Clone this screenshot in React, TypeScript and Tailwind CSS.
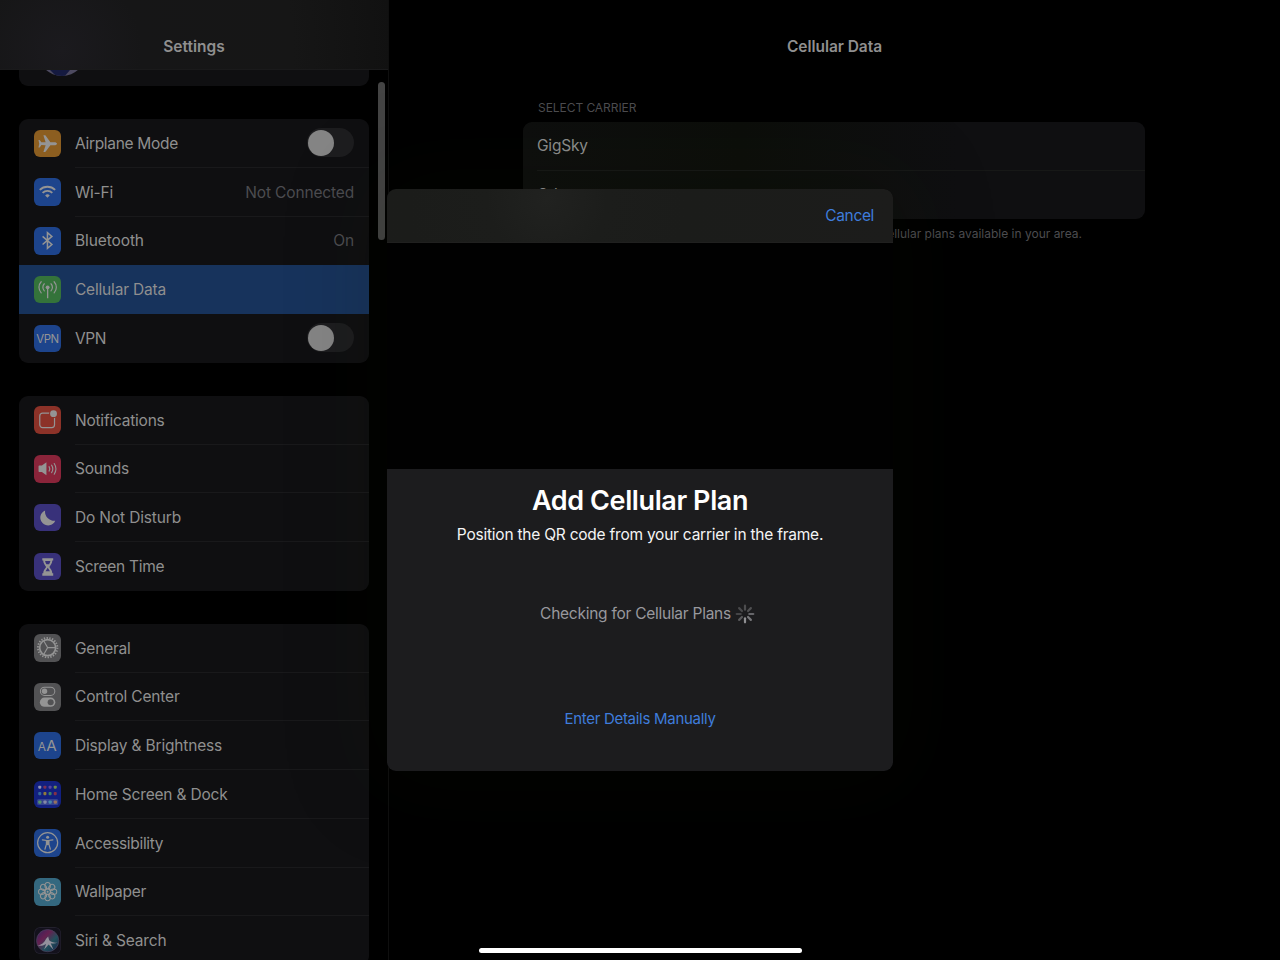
import type { ReactNode } from "react";

const range = (n: number) => Array.from({ length: n }, (_, i) => i);

function Tile({ bg, children }: { bg: string; children: ReactNode }) {
  return (
    <svg viewBox="0 0 27 27" className={`size-[27.3px] shrink-0 rounded-[6px] ${bg}`} fill="none">
      {children}
    </svg>
  );
}

const INK = "#949494";

const icons: Record<string, ReactNode> = {
  airplane: (
    <Tile bg="bg-[#8c5e20]">
      <path
        fill={INK}
        d="M22.8 13.500c0 .8-1.300 1.500-2.800 1.500h-3.800l-4.600 6.300c-.2.3-.5.4-.8.4H9.300l2.200-6.700-4.200-.2-1.700 2.400H4.400l.8-3.700-.8-3.700h1.200l1.700 2.400 4.200-.2-2.200-6.700h1.500c.3 0 .6.1.8.4l4.600 6.300h3.800c1.500 0 2.800.7 2.800 1.500Z"
      />
    </Tile>
  ),
  wifi: (
    <Tile bg="bg-[#1d448c]">
      <path d="M5.700 11.700a10.800 10.800 0 0 1 15.200 0M8.500 14.700a6.800 6.800 0 0 1 9.600 0" stroke={INK} strokeWidth="1.900" />
      <path d="M11 17.200a3.300 3.300 0 0 1 4.600 0l-2.300 2.400Z" fill={INK} />
    </Tile>
  ),
  bluetooth: (
    <Tile bg="bg-[#1d448c]">
      <path d="m8.500 9.300 9.200 8-4.400 3.900V5.600l4.400 3.700-9.200 8" stroke={INK} strokeWidth="1.500" />
    </Tile>
  ),
  cellular: (
    <Tile bg="bg-[#34733a]">
      <circle cx="13.500" cy="11.200" r="1.900" fill={INK} />
      <path d="M13.500 12v10" stroke={INK} strokeWidth="1.300" />
      <path
        d="M10.200 7.700a5 5 0 0 0 0 7M16.800 7.700a5 5 0 0 1 0 7M7.100 5.700a8 8 0 0 0 0 11M19.900 5.700a8 8 0 0 1 0 11"
        stroke={INK}
        strokeWidth="1.200"
        strokeLinecap="round"
      />
    </Tile>
  ),
  vpn: (
    <Tile bg="bg-[#1d448c]">
      <text x="13.500" y="17.500" fontSize="11.300" textAnchor="middle" textLength="22.500" fill={INK}>VPN</text>
    </Tile>
  ),
  notifications: (
    <Tile bg="bg-[#8c3228]">
      <rect x="5.700" y="7" width="14.600" height="14.300" rx="2.800" stroke={INK} strokeWidth="1.200" />
      <circle cx="19.300" cy="7.600" r="4.400" fill="#8c3228" />
      <circle cx="19.300" cy="7.600" r="3.400" fill={INK} />
    </Tile>
  ),
  sounds: (
    <Tile bg="bg-[#8a243a]">
      <path d="M4.500 11.200c0-.5.3-.8.8-.8h2.500l4.500-3.200v12.800l-4.500-3.200H5.300c-.5 0-.8-.3-.8-.8Z" fill={INK} />
      <path
        d="M14.900 11.500a4 4 0 0 1 0 4.400M17.400 10a6.800 6.800 0 0 1 0 7.400M20 8.400a9.800 9.800 0 0 1 0 10.600"
        stroke={INK}
        strokeWidth="1.100"
        strokeLinecap="round"
      />
    </Tile>
  ),
  moon: (
    <Tile bg="bg-[#38317a]">
      <path d="M11 6.400a9 9 0 0 0 10 10.200A7.700 7.700 0 1 1 11 6.400Z" fill={INK} />
    </Tile>
  ),
  hourglass: (
    <Tile bg="bg-[#38317a]">
      <path
        d="M8.200 5.100h10.800v2.400h-.9c-.1 3-1.600 4.400-2.900 6.300 1.300 1.900 2.800 3.300 2.900 6.300h.9v2.400H8.200v-2.400h.9c.1-3 1.600-4.400 2.900-6.300-1.300-1.900-2.800-3.300-2.900-6.300h-.9Z"
        fill={INK}
      />
      <path d="M11 7.900h5.200c-.2 1.500-.7 2.300-1.300 3.200h-2.600c-.6-.9-1.100-1.700-1.300-3.200ZM13.600 14.700l2.200 3.400h-4.400Z" fill="#38317a" />
    </Tile>
  ),
  gear: (
    <Tile bg="bg-[#525254]">
      <circle cx="13.500" cy="13.500" r="7.900" stroke={INK} strokeWidth="1.700" />
      <circle cx="13.500" cy="13.500" r="9.600" stroke={INK} strokeWidth="1.900" strokeDasharray="1.370 1.370" />
      <path d="M13.500 13.500h7.500M13.500 13.500 9.700 7M13.500 13.500 9.700 20" stroke={INK} strokeWidth="1.100" />
    </Tile>
  ),
  control: (
    <Tile bg="bg-[#525254]">
      <rect x="6.300" y="4.100" width="14.300" height="8.200" rx="4.100" stroke={INK} strokeWidth="1" />
      <circle cx="10.400" cy="8.200" r="2.700" fill={INK} />
      <rect x="5.800" y="14.400" width="15.300" height="9.200" rx="4.600" fill={INK} />
      <circle cx="16.500" cy="19" r="3" fill="#525254" />
    </Tile>
  ),
  display: (
    <Tile bg="bg-[#1d448c]">
      <text x="3.600" y="18.800" fontSize="11.800" fill={INK}>A</text>
      <text x="12.200" y="18.800" fontSize="15" fill={INK}>A</text>
    </Tile>
  ),
  home: (
    <Tile bg="bg-[#122080]">
      {["#8f93b0", "#7d3154", "#5c45a0", "#6f8b4a", "#35689a", "#8f7a3a", "#3c8068", "#853048"].map((c, i) => (
        <rect key={i} x={4.200 + (i % 4) * 5.100} y={i < 4 ? 4.600 : 11} width="3" height="3" rx=".8" fill={c} />
      ))}
      <rect x="3" y="17.800" width="21" height="6" rx="1.500" fill="#35438f" />
      {["#55906c", "#8388a8", "#4787a8", "#96705f"].map((c, i) => (
        <rect key={c} x={4.200 + i * 5.100} y="19.200" width="3.200" height="3.200" rx=".8" fill={c} />
      ))}
    </Tile>
  ),
  accessibility: (
    <Tile bg="bg-[#1d448c]">
      <circle cx="13.500" cy="13.500" r="9.900" stroke={INK} strokeWidth="1.200" />
      <circle cx="13.500" cy="8.200" r="1.500" fill={INK} />
      <path
        d="m8.300 10.700 4 .7v3.600l-1.500 5M18.700 10.700l-4 .7v3.600l1.500 5"
        stroke={INK}
        strokeWidth="1.200"
        strokeLinecap="round"
      />
      <path d="M12 11h3v4.500l-1.500.5-1.500-.5Z" fill={INK} />
    </Tile>
  ),
  wallpaper: (
    <Tile bg="bg-[#34687f]">
      {range(8).map((i) => (
        <ellipse
          key={i}
          cx="13.500"
          cy="7.700"
          rx="2.700"
          ry="3.200"
          stroke={INK}
          strokeWidth="1"
          transform={`rotate(${i * 45} 13.500 13.500)`}
        />
      ))}
      <circle cx="13.500" cy="13.500" r="2.900" stroke={INK} strokeWidth="1" />
      <circle cx="13.500" cy="13.500" r="1" fill={INK} />
    </Tile>
  ),
  siri: (
    <Tile bg="bg-[#13111c]">
      <defs>
        <linearGradient id="orb" x1="0" y1="0" x2="1" y2="1">
          <stop offset="0" stopColor="#33235e" />
          <stop offset=".35" stopColor="#652050" />
          <stop offset=".62" stopColor="#22505c" />
          <stop offset="1" stopColor="#152348" />
        </linearGradient>
      </defs>
      <rect x=".5" y=".5" width="26" height="26" rx="5.500" stroke="#23212d" />
      <circle cx="13.500" cy="13.500" r="11" fill="url(#orb)" stroke="#4a425e" strokeWidth=".7" />
      <path
        d="M3.500 18.500c4-1 6.500-3 8.500-7l2-2 1 3.500c2 2 5 2.500 8.500 2.500-3 1-5 .8-7 .5l2.800 6.500-4.800-5.300-4.500 5 2-5.500c-2.500 1.500-5 2.200-8.500 1.800Z"
        fill="#93919c"
      />
    </Tile>
  ),
};

function Toggle() {
  return (
    <span className="flex h-[29px] w-[47.500px] items-center rounded-full bg-[#1d1d1f] pl-[1.500px]">
      <span className="size-[26px] rounded-full bg-[#858585]" />
    </span>
  );
}

type Item = { icon: string; label: string; track: string; detail?: string; toggle?: boolean; selected?: boolean };

const groups: Item[][] = [
  [
    { icon: "airplane", label: "Airplane Mode", track: "tracking-[-0.31px]", toggle: true },
    { icon: "wifi", label: "Wi-Fi", track: "tracking-[-0.2px]", detail: "Not Connected" },
    { icon: "bluetooth", label: "Bluetooth", track: "tracking-[-0.1px]", detail: "On" },
    { icon: "cellular", label: "Cellular Data", track: "tracking-[-0.19px]", selected: true },
    { icon: "vpn", label: "VPN", track: "tracking-[-0.4px]", toggle: true },
  ],
  [
    { icon: "notifications", label: "Notifications", track: "tracking-[-0.22px]" },
    { icon: "sounds", label: "Sounds", track: "tracking-[-0.23px]" },
    { icon: "moon", label: "Do Not Disturb", track: "tracking-[-0.15px]" },
    { icon: "hourglass", label: "Screen Time", track: "tracking-[-0.28px]" },
  ],
  [
    { icon: "gear", label: "General", track: "tracking-[-0.2px]" },
    { icon: "control", label: "Control Center", track: "tracking-[-0.18px]" },
    { icon: "display", label: "Display & Brightness", track: "tracking-[-0.17px]" },
    { icon: "home", label: "Home Screen & Dock", track: "tracking-[-0.19px]" },
    { icon: "accessibility", label: "Accessibility", track: "tracking-[-0.32px]" },
    { icon: "wallpaper", label: "Wallpaper", track: "tracking-[-0.25px]" },
    { icon: "siri", label: "Siri & Search", track: "tracking-[-0.17px]" },
  ],
];

function Row({ item, line }: { item: Item; line: boolean }) {
  return (
    <div className={`flex h-[48.750px] items-center gap-[14px] pl-[14.700px] ${item.selected ? "bg-[#17335c]" : ""}`}>
      {icons[item.icon]}
      <div className={`flex h-full grow items-center justify-between border-b pr-[15px] ${line ? "border-[#19191b]" : "border-transparent"}`}>
        <span className={`pt-[2px] text-[#8f8f8f] ${item.track}`}>{item.label}</span>
        {item.detail && <span className="pt-[2px] tracking-[-0.150px] text-[#4c4c50]">{item.detail}</span>}
        {item.toggle && <Toggle />}
      </div>
    </div>
  );
}

function Sidebar() {
  return (
    <aside className="relative flex h-full w-[389px] shrink-0 flex-col border-r border-[#0f0f0f]">
      <header className="flex h-[70px] shrink-0 justify-center border-b border-[#1a1a1b] bg-[radial-gradient(circle_at_62px_50px,#1b1a1e_0,#161617_80px,#161616_70%,#111111_100%)] pt-[35px] font-semibold text-[#8f8f8f]">
        Settings
      </header>
      <div className="flex flex-col gap-[33px] pr-[19px] pl-[19px]">
        <div className="h-[16px] overflow-hidden rounded-b-[9px] bg-[#0f0f11] pl-[19px]">
          <svg viewBox="0 0 48 16" className="h-4 w-12">
            <defs>
              <clipPath id="avatar">
                <circle cx="24" cy="-18" r="24" />
              </clipPath>
            </defs>
            <g clipPath="url(#avatar)">
              <path d="M0 0h48v16H0Z" fill="#4d4a60" />
              <path d="M12 0h20l-6 7-8-1Z" fill="#151a40" />
            </g>
          </svg>
        </div>
        {groups.map((group, g) => (
          <section key={g} className="overflow-hidden rounded-[9px] bg-[#0f0f11]">
            {group.map((item, i) => (
              <Row key={item.label} item={item} line={i < group.length - 1 && !item.selected && !group[i + 1].selected} />
            ))}
          </section>
        ))}
      </div>
      <span className="absolute top-[82px] left-[378px] h-[158px] w-[7px] rounded-full bg-[#444444]" />
    </aside>
  );
}

function Detail() {
  return (
    <main className="flex grow flex-col">
      <h1 className="pt-[35px] text-center font-semibold tracking-[-0.050px] text-[#8f8f8f]">Cellular Data</h1>
      <div className="mt-[40px] ml-[134px] flex w-[622px] flex-col">
        <h2 className="pl-[15px] text-[12px] leading-[18px] tracking-[-0.060px] text-[#4c4c4f]">SELECT CARRIER</h2>
        <div className="mt-[5px] flex flex-col rounded-[9px] bg-[linear-gradient(to_right,#0e0f0e,#0c0e0a_35%,#0f0f11_70%)] pl-[14px] text-[#8f8f8f]">
          <div className="flex h-[48.500px] items-center border-b border-[#171817] pt-[1px] tracking-[-0.200px]">GigSky</div>
          <div className="flex h-[48px] items-center">Other</div>
        </div>
        <p className="mt-[6px] pr-[63px] text-right text-[12px] leading-[18px] text-[#4c4c4f]">
          cellular plans available in your area.
        </p>
      </div>
    </main>
  );
}

function Spinner() {
  const shades = ["#4d4d4f", "#505052", "#66666a", "#77777a", "#909093", "#5a5a5c", "#454547", "#49494b"];
  return (
    <svg viewBox="-10 -10 20 20" className="size-5">
      {shades.map((shade, i) => (
        <path
          key={i}
          d="M0-4.300v-4"
          stroke={shade}
          strokeWidth="2.200"
          strokeLinecap="round"
          transform={`rotate(${i * 45})`}
        />
      ))}
    </svg>
  );
}

function PlanDialog() {
  return (
    <div
      role="dialog"
      className="absolute top-[189px] left-[387px] flex h-[581.500px] w-[506px] flex-col overflow-hidden rounded-[9px] bg-black shadow-[0_0_90px_20px_rgba(20,30,5,0.150)]"
    >
      <header className="flex h-[53.500px] items-center justify-end border-b border-[#20201f] bg-[radial-gradient(circle_at_160px_10px,#212220_0,#1c1d1b_60px,#1b1c1a_40%,#1c1c1b_100%)] pt-[2px] pr-[19px]">
        <button className="tracking-[-0.350px] text-[#3f7cdc]">Cancel</button>
      </header>
      <div className="h-[226px] shrink-0 bg-[#010101]" />
      <div className="flex grow flex-col items-center bg-[#1c1c1e]">
        <h2 className="mt-[15px] text-[27px] leading-[34px] font-semibold tracking-[-0.400px] text-white">Add Cellular Plan</h2>
        <p className="mt-[5px] tracking-[-0.230px] text-[#f4f4f4]">Position the QR code from your carrier in the frame.</p>
        <div className="mt-[55px] flex items-center gap-[4px] pl-[15px] tracking-[-0.260px] text-[#98989d]">
          Checking for Cellular Plans
          <Spinner />
        </div>
        <button className="mt-[81px] text-[15px] tracking-[-0.290px] text-[#3f7cdc]">Enter Details Manually</button>
      </div>
    </div>
  );
}

export default function App() {
  return (
    <div className="relative flex h-[960px] w-[1280px] overflow-hidden bg-black font-['Inter',sans-serif] text-[15.500px] leading-[24px] whitespace-nowrap">
      <Sidebar />
      <Detail />
      <PlanDialog />
      <span className="absolute bottom-[7px] left-[478.500px] h-[5px] w-[323px] rounded-full bg-white" />
    </div>
  );
}
